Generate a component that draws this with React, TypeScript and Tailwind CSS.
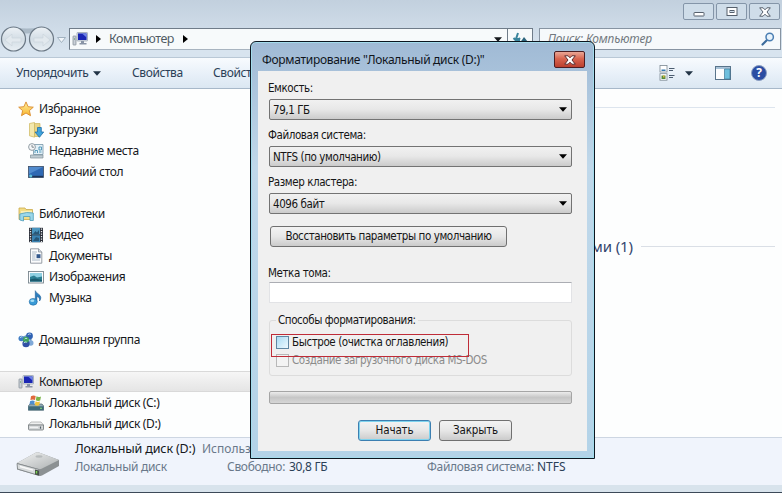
import type { ReactNode } from 'react';

const COMPUTER = (
  <>
    <rect x="1" y="5" width="3" height="9" rx="0.5" fill="#c9d0d8" stroke="#7d8791" strokeWidth="0.7" />
    <path d="M2 8h1" stroke="#4f9a58" />
    <rect x="5" y="1.5" width="10.5" height="8.5" rx="0.6" fill="#dfe5ec" stroke="#8d98a8" strokeWidth="0.7" />
    <rect x="6" y="2.4" width="8.6" height="6.6" fill="#1a26b4" />
    <path d="M10 2.4h4.6v4z" fill="#6f83e6" />
    <path d="M9 10h3v2h2.5v1.5h-7V12H9z" fill="#8994a6" />
  </>
);

const ICONS: Record<string, ReactNode> = {
  computer: COMPUTER,
  star: (
    <path
      d="M8 .9l2.1 4.8 5.2.5-3.9 3.4 1.1 5.1L8 12l-4.5 2.7 1.1-5.1L.7 6.2l5.2-.5z"
      fill="url(#gold)"
      stroke="#d98a2b"
      strokeWidth="0.9"
    />
  ),
  downloads: (
    <>
      <path d="M1.5 1.5l5-1v14.7l-5-1.4z" fill="#f3e8ae" stroke="#cdb65c" strokeWidth="0.7" />
      <path d="M6.5 1.5H12v13H6.5z" fill="#e8d588" stroke="#cdb65c" strokeWidth="0.7" />
      <path d="M9.5 5.5h3.8V10h2.4l-4.3 5.3L7 10h2.5z" fill="#3fa4dc" stroke="#1f6fa8" strokeWidth="0.8" />
    </>
  ),
  recent: (
    <>
      <path d="M5.5 1.5H15v10H5.5z" fill="#e3f1f8" stroke="#7596a8" strokeWidth="0.8" />
      <path d="M7 10V7.5h2.5V10M11 4h2.5v3H11zM11 9h2.5" fill="none" stroke="#4b93b5" strokeWidth="0.9" />
      <path d="M2.5 12H15v3H2.5z" fill="#bfccd3" stroke="#81919a" strokeWidth="0.7" />
      <circle cx="4" cy="4" r="3.4" fill="#f6f8f9" stroke="#87949c" strokeWidth="0.9" />
      <path d="M4 2v2.2H6" fill="none" stroke="#66727a" strokeWidth="0.8" />
    </>
  ),
  desktop: (
    <>
      <rect x="0.5" y="2.5" width="15" height="11" fill="#2f69b4" stroke="#3c4e66" strokeWidth="0.8" />
      <path d="M1 3h14L1 10z" fill="#5f9ad8" opacity="0.7" />
      <path d="M1 11.8h14v1.4H1z" fill="#1e3458" />
      <circle cx="2.7" cy="12" r="1.6" fill="#5fbfd8" />
    </>
  ),
  libraries: (
    <>
      <path d="M1 2h6l1 1.5h6.5v10H1z" fill="#f4dd86" stroke="#c9aa4a" strokeWidth="0.8" />
      <path d="M3 5h11v4H3z" fill="#fbefb6" />
      <path d="M1.8 8q7-2.5 13.5-1v7.5H12v-4H5.5V15l-3.7-1z" fill="#9bd7ea" stroke="#4e9db9" strokeWidth="0.8" />
    </>
  ),
  video: (
    <>
      <path d="M1 .8h14v14.4H1z" fill="#2a2f38" />
      <path d="M4 .8h8v6.7H4z" fill="#4a95bf" />
      <path d="M4 8.3h8v6.9H4z" fill="#3a83b3" />
      <path d="M5 7l2.5-3L9 5.5 11 3v4zM5 14l3-4 3 1v3z" fill="#265778" />
      <path d="M2.5 1.5V15M13.5 1.5V15" stroke="#e8ecef" strokeWidth="1.3" strokeDasharray="1.3 1.2" />
    </>
  ),
  documents: (
    <>
      <path d="M2.5.8h8L13.8 4v11.2H2.5z" fill="#fbfcfd" stroke="#7e8790" strokeWidth="0.8" />
      <path d="M10.5.8V4h3.3" fill="#d6dde4" stroke="#7e8790" strokeWidth="0.7" />
      <path d="M4 4h5M4 6h4M4 8h3.5M4 10h3.5M4 12h8" stroke="#9aa8b8" strokeWidth="0.8" />
      <path d="M8.5 6.2h4v4h-4z" fill="#34598c" />
    </>
  ),
  pictures: (
    <>
      <rect x="0.5" y="2.5" width="15" height="11.5" fill="#fafcfd" stroke="#79868e" strokeWidth="0.9" />
      <path d="M2 4h12v8.5H2z" fill="#8fd0e2" />
      <path d="M2 8l4-1.5 3 2 5-1v5H2z" fill="#2b7f93" />
      <path d="M2 10.5l5-1 7 1.5v1.5H2z" fill="#1a5a6e" />
    </>
  ),
  music: (
    <>
      <path
        d="M7.3.7c.4 2.5 5.5 3.5 5.5 7 0 1.3-.5 2.5-1.3 3.3.5-2.7-.6-4-2.6-4.5v5.7H7.3z"
        fill="#2c7fc0"
        stroke="#1d5c96"
        strokeWidth="0.6"
      />
      <ellipse cx="5.2" cy="11.8" rx="4" ry="3.4" fill="#3a9bd6" stroke="#1f6aa5" strokeWidth="0.6" />
      <ellipse cx="4.3" cy="10.7" rx="2" ry="1.2" fill="#a5ddf5" />
    </>
  ),
  homegroup: (
    <>
      <path d="M4 6l5-2.5L13 8 9 12.5z" fill="none" stroke="#6f9fc2" strokeWidth="1.5" />
      <circle cx="3.3" cy="6.5" r="2.8" fill="#3f7dc4" />
      <circle cx="11.5" cy="4" r="3.4" fill="#2f62b3" />
      <circle cx="12.8" cy="11" r="2.7" fill="#7fa9d8" />
      <circle cx="8" cy="11.7" r="3.6" fill="#3150a6" />
      <circle cx="8" cy="7.7" r="3" fill="#3da35c" />
      <path
        d="M2 5.8q1-1.6 2.5-.8M9.8 2.8q1.3-1.5 3-.5M6.7 7q1.1-1.3 2.5-.4M5.8 11q1-1.7 3-.8"
        fill="none"
        stroke="#cfe8f5"
        strokeWidth="0.9"
      />
    </>
  ),
  system: (
    <>
      <path d="M2 9h12l1.7 2v4.2H.3V11z" fill="#8fa9b5" stroke="#50646f" strokeWidth="0.7" />
      <path d="M.3 11.3h15.4v3.9H.3z" fill="#3f6a7a" />
      <path d="M12 13.2h2" stroke="#86e27a" strokeWidth="1.1" />
      <path d="M3 1.2q2.5-1.5 4.7-.2L7 5q-2-1.2-4.6 0z" fill="#e0693c" />
      <path d="M8.5 1.3q2 1.4 4.5.2l-.8 4q-2.2 1-4.4-.2z" fill="#7bb548" />
      <path d="M2.2 6q2.4-1.2 4.5 0L6 9.7q-2-1.3-4.6-.1z" fill="#4d8ed0" />
      <path d="M7.6 6.3q2 1.2 4.4.2l-.8 3.8q-2.2 1-4.4-.2z" fill="#f2c43d" />
    </>
  ),
  drive: (
    <>
      <path d="M3 6h10l2.6 3H.4z" fill="#eeefef" stroke="#a3a7a8" strokeWidth="0.7" />
      <path d="M.5 9h15v4q0 1-1 1h-13q-1 0-1-1z" fill="#d5d8d9" stroke="#6f7678" strokeWidth="0.8" />
      <path d="M2 11.3h8" stroke="#f8f9f9" />
      <path d="M12.5 10.5v2.2" stroke="#52606a" strokeWidth="1.2" />
    </>
  ),
};

function Icon({ name }: { name: string }) {
  return (
    <svg viewBox="0 0 16 16" className="h-4 w-4 shrink-0">
      {ICONS[name]}
    </svg>
  );
}

type NavItem = { icon: string; label: string; level: number; gap?: boolean; active?: boolean };

const NAV: NavItem[] = [
  { icon: 'star', label: 'Избранное', level: 0 },
  { icon: 'downloads', label: 'Загрузки', level: 1 },
  { icon: 'recent', label: 'Недавние места', level: 1 },
  { icon: 'desktop', label: 'Рабочий стол', level: 1 },
  { icon: 'libraries', label: 'Библиотеки', level: 0, gap: true },
  { icon: 'video', label: 'Видео', level: 1 },
  { icon: 'documents', label: 'Документы', level: 1 },
  { icon: 'pictures', label: 'Изображения', level: 1 },
  { icon: 'music', label: 'Музыка', level: 1 },
  { icon: 'homegroup', label: 'Домашняя группа', level: 0, gap: true },
  { icon: 'computer', label: 'Компьютер', level: 0, gap: true, active: true },
  { icon: 'system', label: 'Локальный диск (C:)', level: 1 },
  { icon: 'drive', label: 'Локальный диск (D:)', level: 1 },
];

function Sidebar() {
  return (
    <nav className="h-full w-[251px] shrink-0 overflow-hidden border-r border-[#f0f6fb] pt-[9px] text-[12px] tracking-[-0.35px] text-[#16181c]">
      {NAV.map((item) => (
        <div
          key={item.label}
          className={`flex h-[21px] items-center gap-[5px] whitespace-nowrap ${item.gap ? 'mt-[21px]' : ''} ${
            item.level ? 'pl-7' : 'pl-[18px]'
          } ${item.active ? 'border-y border-[#d9d9d9] bg-linear-to-b from-[#f6f6f6] to-[#e5e5e5]' : ''}`}
        >
          <Icon name={item.icon} />
          <span>{item.label}</span>
        </div>
      ))}
    </nav>
  );
}

function Triangle({ className }: { className: string }) {
  return (
    <svg viewBox="0 0 8 5" className={`h-[5px] w-2 shrink-0 ${className}`}>
      <path d="M0 .3h8L4 4.8z" fill="currentColor" />
    </svg>
  );
}

function TitleBar() {
  const button = 'flex h-[17px] w-[31px] items-center justify-center rounded-[2px] border border-[#8495a8] bg-[#cfdde9]';
  return (
    <div className="flex h-7 items-start justify-end gap-[2px] pr-[2px] pt-[3px]">
      <div className={button}>
        <svg viewBox="0 0 12 12" className="h-3 w-3">
          <rect x="1" y="6.5" width="10" height="3.5" rx="0.5" fill="#fff" stroke="#56606c" />
        </svg>
      </div>
      <div className={button}>
        <svg viewBox="0 0 12 12" className="h-3 w-3">
          <rect x="1" y="1.5" width="10" height="8" fill="#fff" stroke="#56606c" />
          <rect x="4" y="4.5" width="4" height="2" fill="#cfdde9" stroke="#56606c" />
        </svg>
      </div>
      <div className={button}>
        <CloseGlyph stroke="#56606c" />
      </div>
    </div>
  );
}

function CloseGlyph({ stroke }: { stroke: string }) {
  return (
    <svg viewBox="0 0 12 10" className="h-[10px] w-3">
      <path d="M.7.8h3.4L6 2.8l1.9-2h3.4L8 5l3.3 4.2H7.9L6 7.2l-1.9 2H.7L4 5z" fill="#fff" stroke={stroke} strokeWidth="1" />
    </svg>
  );
}

function AddressRow() {
  return (
    <div className="flex h-[29px] items-start">
      <svg viewBox="0 0 69 29" className="-mt-[3px] h-[29px] w-[69px] shrink-0">
        <path d="M13 2q14 3 28 0v5q-14 3-28 0z" fill="#aab9c6" />
        <circle cx="13.5" cy="14" r="12" fill="url(#nav)" stroke="#6b7885" strokeWidth="1.2" />
        <circle cx="41.5" cy="14" r="12" fill="url(#nav)" stroke="#6b7885" strokeWidth="1.2" />
        <path d="M5 15l7-6v4h9v4h-9v4z" fill="#e2e9ee" stroke="#cbd5dd" strokeWidth="0.7" />
        <path d="M50 15l-7-6v4h-9v4h9v4z" fill="#e2e9ee" stroke="#cbd5dd" strokeWidth="0.7" />
        <path d="M57.5 12.5h8l-4 5z" fill="#f2f6fa" stroke="#9aabba" strokeWidth="0.9" />
      </svg>
      <div className="flex h-[22px] w-[464px] border border-[#6f7c89] border-b-[#a8b4c0] bg-[#f7fafb]">
        <div className="flex flex-1 items-center pl-[2px] pr-[5px] text-[12.5px] tracking-[-0.45px] text-[#505a64]">
          <Icon name="computer" />
          <svg viewBox="0 0 5 8" className="ml-2 h-2 w-[5px] text-black">
            <path d="M0 0l5 4-5 4z" fill="currentColor" />
          </svg>
          <span className="ml-2 w-[64px] whitespace-nowrap">Компьютер</span>
          <svg viewBox="0 0 5 8" className="ml-[10px] h-2 w-[5px] text-black">
            <path d="M0 0l5 4-5 4z" fill="currentColor" />
          </svg>
          <Triangle className="ml-auto text-[#15181c]" />
        </div>
        <div className="flex w-[25px] items-center justify-center border-l border-[#6f7c89]">
          <svg viewBox="0 0 16 16" className="h-4 w-4" fill="none" stroke="#39849c" strokeWidth="2">
            <path d="M6 2L4 8h3v5M1.5 7L5 10.5 8 7" />
            <path d="M8.5 11L12 6l4 5z" fill="#2d657d" stroke="none" />
          </svg>
        </div>
      </div>
      <div className="ml-[6px] flex h-[22px] w-[242px] items-center justify-between border border-[#8794a2] bg-[#f6f9fb] pl-2 pr-[5px]">
        <span className="whitespace-nowrap text-[12px] italic tracking-[-0.2px] text-[#727980]">Поиск: Компьютер</span>
        <svg viewBox="0 0 14 14" className="h-[14px] w-[14px]" fill="none">
          <path d="M1.5 12.5L6 8" stroke="#3d6c9c" strokeWidth="2.2" strokeLinecap="round" />
          <circle cx="8.7" cy="5" r="3.7" fill="#e7f3fc" stroke="#4a7eb2" strokeWidth="1.5" />
        </svg>
      </div>
    </div>
  );
}

function Toolbar() {
  return (
    <div className="flex h-8 items-center border-b border-t border-b-[#a7b8c9] border-t-[#b9c8d6] bg-linear-to-b from-[#f8fbfe] via-[#e9f1f9] to-[#dbe7f2] pl-4 pr-[15px] text-[12px] tracking-[-0.4px] text-[#2b4057]">
      <span className="w-[73px] whitespace-nowrap">Упорядочить</span>
      <Triangle className="ml-1 text-[#223446]" />
      <span className="ml-[31px] w-[52px] whitespace-nowrap">Свойства</span>
      <span className="ml-[29px] w-[52px] whitespace-nowrap">Свойства</span>
      <svg viewBox="0 0 16 16" className="ml-auto h-4 w-4">
        <rect x="1" y="0.5" width="7" height="6.5" fill="#fff" stroke="#7b8791" strokeWidth="0.8" />
        <rect x="1" y="8.7" width="7" height="6.5" fill="#fff" stroke="#7b8791" strokeWidth="0.8" />
        <path d="M2.5 4.5h4V6h-4z" fill="#3278b0" />
        <path d="M2.5 10.5h4V14h-4z" fill="#558a3f" />
        <path d="M4 10.5h1.5v2H4z" fill="#e0b637" />
        <path d="M10 3.5h5.5M10 5.5h4M10 10.5h5.5M10 12.5h4" stroke="#4c5d70" />
      </svg>
      <Triangle className="ml-[10px] text-[#223446]" />
      <svg viewBox="0 0 16 14" className="ml-[22px] h-[14px] w-4">
        <rect x="0.5" y="0.5" width="15" height="13" fill="#fcfdfe" stroke="#59748b" />
        <path d="M1 1h14v2H1z" fill="#a9c3d8" />
        <path d="M9.5 3H15v10H9.5z" fill="#6fc0de" stroke="#3d7998" strokeWidth="0.7" />
      </svg>
      <div className="ml-5 flex h-4 w-4 items-center justify-center rounded-full border border-[#8c9fc2] bg-[#2b4da3] font-['Open_Sans',sans-serif] text-[12px] font-bold leading-none text-white">
        ?
      </div>
    </div>
  );
}

function DetailsPane() {
  return (
    <footer className="flex h-[48px] items-center border-t border-[#cdd6e2] bg-[#f0f4fc] text-[12px] tracking-[-0.3px] text-[#69788a]">
      <svg viewBox="0 0 44 26" className="ml-4 mt-1 h-[26px] w-11 shrink-0">
        <path d="M1 12L20 1.5q1.5-.7 3 0L43 9v6L26 24.5q-1.5.8-3 .3L1 18.5z" fill="#8c9193" />
        <path d="M1 12L20 1.5q1.5-.7 3 0L43 9 25.5 17.8q-1.5.7-3 .3z" fill="url(#hdd)" />
        <path d="M1 12.5l22 6v6L1.5 18z" fill="#d9dcdd" stroke="#7c8284" strokeWidth="0.8" />
        <path d="M4 15.5l13 3.6" stroke="#fafafa" strokeWidth="1.5" />
        <path d="M19 18.5l4 1v5l-4-1z" fill="#465047" />
        <path d="M20.5 20v2.5" stroke="#79d34f" strokeWidth="1.4" />
        <ellipse cx="23" cy="5.5" rx="3.5" ry="1.2" fill="#b7bbbc" />
      </svg>
      <div className="-mt-[8px] ml-[15px] flex flex-col whitespace-nowrap leading-[18px]">
        <div className="flex">
          <span className="w-[127px] text-[12.5px] tracking-[-0.15px] text-[#15181c]">Локальный диск (D:)</span>
          <span className="tracking-normal">Использовано:</span>
        </div>
        <div className="flex">
          <span className="w-[152px]">Локальный диск</span>
          <span className="w-[62px]">Свободно:</span>
          <span className="w-[138px] text-[#2b4057]">30,8 ГБ</span>
          <span className="w-[110px]">Файловая система:</span>
          <span className="tracking-normal text-[#2b4057]">NTFS</span>
        </div>
      </div>
    </footer>
  );
}

function Select({ label, value }: { label: string; value: string }) {
  return (
    <div className="h-[47px]">
      <div className="-ml-px h-5 leading-[19px]">{label}</div>
      <div className="flex h-[21px] items-center justify-between rounded-[2px] border border-[#737373] bg-linear-to-b from-[#f1f1f1] from-0% via-[#e8e8e8] via-48% to-[#cbcbcb] pl-[3px] pr-1">
        <span className="pt-[2px]">{value}</span>
        <Triangle className="text-black" />
      </div>
    </div>
  );
}

function FormatDialog() {
  const button =
    'flex h-[21px] items-center justify-center whitespace-nowrap rounded-[3px] border bg-linear-to-b from-[#f3f3f3] from-0% via-[#e7e7e7] via-50% to-[#cbcbcb] pt-px';
  return (
    <div className="absolute left-[250px] top-[41px] flex h-[418px] w-[345px] flex-col rounded-t-[6px] border border-[#0c1620] bg-linear-to-b from-[#a0bad5] via-[#c0d8ea] via-30% to-[#b3d3e8] px-[7px] pb-[7px] shadow-[inset_0_0_0_1px_#a4dcec]">
      <div className="flex h-[29px] items-center justify-between pl-1 pr-[2px] text-[12px] tracking-[-0.3px] text-[#10151c]">
        <span className="mt-[6px] whitespace-nowrap">Форматирование "Локальный диск (D:)"</span>
        <div className="mt-[6px] flex h-[17px] w-[31px] items-center justify-center rounded-[2px] border border-[#4c1d22] bg-linear-to-b from-[#e9a697] via-[#d8644f] via-45% to-[#bb3f2e]">
          <CloseGlyph stroke="#5c2d30" />
        </div>
      </div>
      <div className="flex-1 bg-[#f0f0f0] pl-[11px] pr-[15px] pt-2 font-['DejaVu_Sans_Condensed','DejaVu_Sans',sans-serif] text-[11.5px] tracking-[-0.42px] text-[#151515]">
        <Select label="Емкость:" value="79,1 ГБ" />
        <Select label="Файловая система:" value="NTFS (по умолчанию)" />
        <Select label="Размер кластера:" value="4096 байт" />
        <div className={`${button} ml-px mt-[6px] w-[237px] border-[#707070]`}>Восстановить параметры по умолчанию</div>
        <div className="-ml-px mt-[17px] h-[18px] leading-[18px]">Метка тома:</div>
        <div className="h-[21px] border border-[#e2e3e6] border-t-[#abadb3] bg-white" />
        <fieldset className="relative mt-[9px] h-[64px] rounded-[3px] border border-[#dcdcdc] pl-[6px]">
          <legend className="px-[2px] leading-[16px]">Способы форматирования:</legend>
          <div className="mt-[6px] flex h-[16px] items-center gap-[3px]">
            <span className="h-[13px] w-[13px] border border-[#5f87a3] bg-linear-to-br from-[#a9dcf4] to-[#eef9fe]" />
            <span className="pt-[2px]">Быстрое (очистка оглавления)</span>
          </div>
          <div className="mt-[2px] flex h-[16px] items-center gap-[3px] text-[#8b8b8b]">
            <span className="h-[13px] w-[13px] border border-[#b8b8b8] bg-[#f3f3f3]" />
            <span className="pt-[2px]">Создание загрузочного диска MS-DOS</span>
          </div>
          <div className="absolute left-[1px] top-[6px] h-[23px] w-[198px] border border-[#bf2c38]" />
        </fieldset>
        <div className="mt-[15px] h-[13px] rounded-[2px] border border-[#a5a5a5] bg-linear-to-b from-[#ececec] via-[#c6c6c6] to-[#d6d6d6]" />
        <div className="mt-4 flex gap-2 pl-[89px] tracking-[-0.15px]">
          <div className={`${button} w-[73px] border-[#3c7fb1] shadow-[inset_0_0_0_1px_#7fd3ee]`}>Начать</div>
          <div className={`${button} w-[73px] border-[#707070]`}>Закрыть</div>
        </div>
      </div>
    </div>
  );
}

export default function App() {
  return (
    <div className="relative flex h-[493px] w-[782px] flex-col overflow-hidden bg-linear-to-b from-[#c2d0de] from-0% via-[#d8e4ef] via-10% to-[#d9e5ee] font-['Noto_Sans',sans-serif]">
      <svg className="absolute h-0 w-0">
        <defs>
          <linearGradient id="gold" x1="0" y1="0" x2="0" y2="1">
            <stop offset="0" stopColor="#fff0a0" />
            <stop offset="1" stopColor="#f8b52c" />
          </linearGradient>
          <linearGradient id="nav" x1="0" y1="0" x2="0" y2="1">
            <stop offset="0" stopColor="#edf2f6" />
            <stop offset="0.5" stopColor="#d3dde5" />
            <stop offset="1" stopColor="#e9eff4" />
          </linearGradient>
          <linearGradient id="hdd" x1="0" y1="0" x2="1" y2="1">
            <stop offset="0" stopColor="#f3f4f4" />
            <stop offset="1" stopColor="#acb0b1" />
          </linearGradient>
        </defs>
      </svg>
      <TitleBar />
      <AddressRow />
      <Toolbar />
      <div className="flex h-[348px] bg-[#fdfefe]">
        <Sidebar />
        <main className="flex flex-1 flex-col">
          <div className="mt-[18px] h-px w-[524px] bg-[#dde5ee]" />
          <div className="mt-[127px] flex w-[524px] items-center gap-2">
            <span className="w-[382px] shrink-0 whitespace-nowrap text-right text-[15px] tracking-[-0.1px] text-[#34476f]">
              носителями (1)
            </span>
            <span className="h-px flex-1 bg-[#dadfe6]" />
          </div>
        </main>
      </div>
      <DetailsPane />
      <div className="h-[7px] bg-[#d8e3ec]" />
      <div className="h-px bg-[#3c4958]" />
      <FormatDialog />
    </div>
  );
}
